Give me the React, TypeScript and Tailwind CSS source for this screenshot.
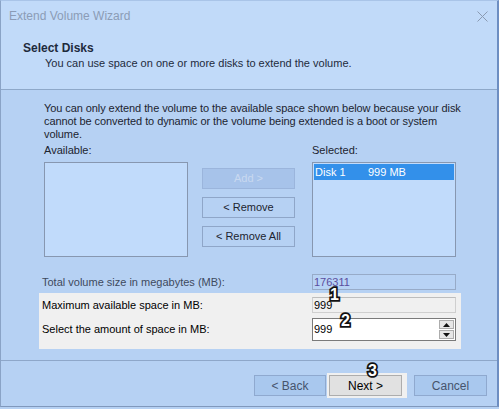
import React from "react";

function Btn({ children, disabled, className = "" }: { children: React.ReactNode; disabled?: boolean; className?: string }) {
  return (
    <div
      className={
        "h-[21px] flex items-center justify-center border text-[11px] " +
        (disabled
          ? "bg-[#a7c3ea] border-[#9bb5dc] text-[#c9d9f0] "
          : "bg-[#b6d1f3] border-[#8fa6c8] text-[#1c2430] ") +
        className
      }
    >
      {children}
    </div>
  );
}

function Num({ children, className = "" }: { children: React.ReactNode; className?: string }) {
  return (
    <span
      className={
        "absolute font-['Liberation_Sans',Arial,sans-serif] font-bold text-[16px] leading-none text-white [-webkit-text-stroke:3.5px_#111] [paint-order:stroke_fill] " +
        className
      }
    >
      {children}
    </span>
  );
}

export default function App() {
  return (
    <div className="w-[499px] h-[409px] bg-[#b6d1f3] overflow-hidden relative font-['Liberation_Sans',Arial,sans-serif] text-[11px] text-[#1c2430]">
      <div className="w-[499px] h-[407px] flex flex-col border-l border-l-[#8aa3c6] border-t border-t-[#a9c4e8] border-r-2 border-r-[#6d8ec2] border-b border-b-[#8098bc]">
        {/* header */}
        <div className="h-[89px] shrink-0 bg-[#c1daf9] border-b border-[#8ea8c9] flex flex-col">
          <div className="h-[30px] flex items-center justify-between pl-[8px] pr-[9px]">
            <span className="text-[12px] text-[#8b9cb6]">Extend Volume Wizard</span>
            <svg width="11" height="11" viewBox="0 0 11 11">
              <path d="M0.5 0.5 L10.5 10.5 M10.5 0.5 L0.5 10.5" stroke="#8a9ab2" strokeWidth="1" fill="none" />
            </svg>
          </div>
          <div className="mt-[10px] pl-[22px] text-[12px] leading-[15px] font-bold text-[#1e2a3c]">Select Disks</div>
          <div className="pl-[44px] text-[11px] leading-[15px] text-[#1e2a3c]">
            You can use space on one or more disks to extend the volume.
          </div>
        </div>

        {/* body */}
        <div className="flex-1 flex flex-col pl-[41px] pt-[12px]">
          <div className="ml-[2px] leading-[13px] whitespace-nowrap tracking-[-0.08px]">
            You can only extend the volume to the available space shown below because your disk
            <br />
            cannot be converted to dynamic or the volume being extended is a boot or system
            <br />
            volume.
          </div>
          <div className="ml-[2px] mt-[3px] flex">
            <div className="w-[144px] flex flex-col">
              <div className="h-[13px] leading-[13px]">Available:</div>
              <div className="mt-[5px] h-[95px] border border-[#8797b0] bg-[#c1dbfb]" />
            </div>
            <div className="ml-[14px] w-[93px] pt-[24px] flex flex-col gap-[8px]">
              <Btn disabled>Add &gt;</Btn>
              <Btn>&lt; Remove</Btn>
              <Btn>&lt; Remove All</Btn>
            </div>
            <div className="ml-[17px] w-[144px] flex flex-col">
              <div className="h-[13px] leading-[13px]">Selected:</div>
              <div className="mt-[5px] h-[95px] border border-[#8797b0] bg-[#c1dbfb] p-[1px]">
                <div className="h-[16px] bg-[#3390ea] text-white flex items-center text-[11px]">
                  <span className="pl-[1px] w-[54px]">Disk 1</span>
                  <span>999 MB</span>
                </div>
              </div>
            </div>
          </div>

          <div className="mt-[17px] flex items-center h-[16px]">
            <span className="w-[270px] text-[#3e4a5e]">Total volume size in megabytes (MB):</span>
            <div className="w-[144px] h-[16px] border border-[#97abc8] bg-[#b8d3f5] flex items-center pl-[1px] text-[#5b4e9e]">
              176311
            </div>
          </div>

          <div className="mt-[3px] -ml-[3px] w-[422px] h-[56px] bg-[#f0f0f0] pl-[3px] pt-[4px] flex flex-col text-black">
            <div className="flex items-center h-[16px]">
              <span className="w-[270px]">Maximum available space in MB:</span>
              <div className="w-[144px] h-[16px] border border-[#cfcfcf] border-t-[#bdbdbd] bg-[#f0f0f0] flex items-center pl-[1px]">
                999
              </div>
            </div>
            <div className="mt-[5px] flex items-center h-[23px]">
              <span className="w-[270px]">Select the amount of space in MB:</span>
              <div className="w-[144px] h-[23px] border border-[#7a7a7a] bg-white flex">
                <div className="flex-1 flex items-center pl-[1px]">999</div>
                <div className="w-[17px] flex flex-col p-[1px] gap-[1px]">
                  <div className="flex-1 bg-[#e6e6e6] border border-[#acacac] flex items-center justify-center">
                    <svg width="7" height="4" viewBox="0 0 7 4"><path d="M0 4 L3.5 0 L7 4 Z" fill="#111" /></svg>
                  </div>
                  <div className="flex-1 bg-[#e6e6e6] border border-[#acacac] flex items-center justify-center">
                    <svg width="7" height="4" viewBox="0 0 7 4"><path d="M0 0 L3.5 4 L7 0 Z" fill="#111" /></svg>
                  </div>
                </div>
              </div>
            </div>
          </div>
        </div>

        {/* footer */}
        <div className="h-[46px] shrink-0 border-t border-[#8ea7c9] flex items-start justify-end pr-[10px] pt-[12px]">
          <div className="mt-[2px] w-[72px] h-[21px] border border-[#8fa9cf] bg-[#a9c8ee] flex items-center justify-center text-[12px] text-[#46546c]">
            &lt; Back
          </div>
          <div className="ml-[1px] bg-[#f0f0f0] pl-[2px] pr-[5px] py-[2px]">
            <div className="w-[73px] h-[21px] border border-[#adadad] bg-[#e1e1e1] flex items-center justify-center text-[12px] text-black">
              Next &gt;
            </div>
          </div>
          <div className="ml-[7px] mt-[2px] w-[73px] h-[21px] border border-[#8fa9cf] bg-[#a9c8ee] flex items-center justify-center text-[12px] text-[#46546c]">
            Cancel
          </div>
        </div>
      </div>

      <Num className="left-[330px] top-[287px]">1</Num>
      <Num className="left-[341px] top-[313px]">2</Num>
      <Num className="left-[368px] top-[363px]">3</Num>
    </div>
  );
}
